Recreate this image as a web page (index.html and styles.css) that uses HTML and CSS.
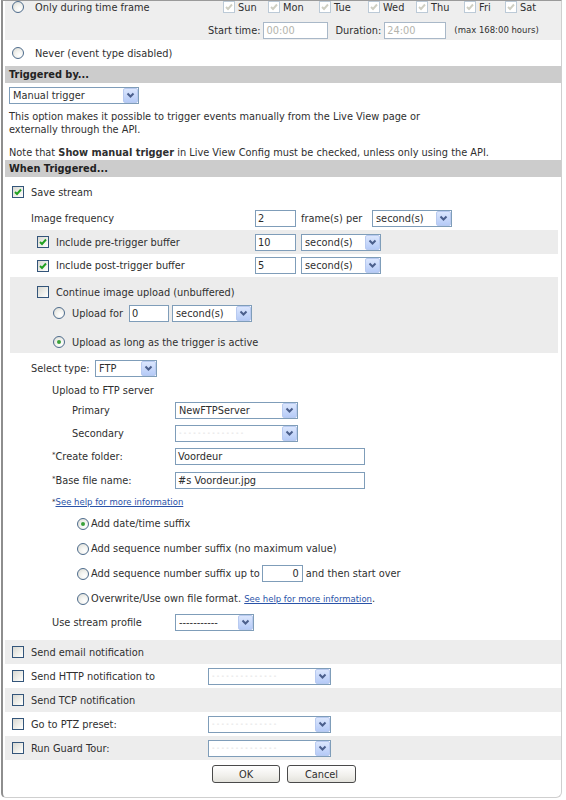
FILE: index.html
```html
<!DOCTYPE html>
<html>
<head>
<meta charset="utf-8">
<link rel="stylesheet" href="styles.css">
</head>
<body>
<div class="frame">

  <div class="timerow">
    <div class="tl1">
      <span class="rb"></span><span class="tlabel">Only during time frame</span>
      <div class="days">
        <span class="day"><span class="cb dis"><svg viewBox="0 0 10 10"><path d="M2 5l2 2 4-4.5"/></svg></span>Sun</span>
        <span class="day"><span class="cb dis"><svg viewBox="0 0 10 10"><path d="M2 5l2 2 4-4.5"/></svg></span>Mon</span>
        <span class="day"><span class="cb dis"><svg viewBox="0 0 10 10"><path d="M2 5l2 2 4-4.5"/></svg></span>Tue</span>
        <span class="day"><span class="cb dis"><svg viewBox="0 0 10 10"><path d="M2 5l2 2 4-4.5"/></svg></span>Wed</span>
        <span class="day"><span class="cb dis"><svg viewBox="0 0 10 10"><path d="M2 5l2 2 4-4.5"/></svg></span>Thu</span>
        <span class="day"><span class="cb dis"><svg viewBox="0 0 10 10"><path d="M2 5l2 2 4-4.5"/></svg></span>Fri</span>
        <span class="day"><span class="cb dis"><svg viewBox="0 0 10 10"><path d="M2 5l2 2 4-4.5"/></svg></span>Sat</span>
      </div>
    </div>
    <div class="tl2">
      <span>Start time:</span>
      <span class="inp dis w-start">00:00</span>
      <span class="lab-dur">Duration:</span>
      <span class="inp dis w-dur">24:00</span>
      <span class="small">(max 168:00 hours)</span>
    </div>
  </div>

  <div class="never"><span class="rb"></span><span class="nlabel">Never (event type disabled)</span></div>

  <div class="hdr">Triggered by...</div>
  <div class="trig">
    <div class="sel w-trig"><span class="v">Manual trigger</span><span class="arr"><svg viewBox="0 0 9 7"><path d="M1.5 1.5 4.5 4.5 7.5 1.5"/></svg></span></div>
  </div>
  <p class="para">This option makes it possible to trigger events manually from the Live View page or<br>externally through the API.</p>
  <p class="para note">Note that <b>Show manual trigger</b> in Live View Config must be checked, unless only using the API.</p>

  <div class="hdr hdr2">When Triggered...</div>

  <div class="save"><span class="cb on"><svg viewBox="0 0 10 10"><path d="M2 5l2 2 4-4.5"/></svg></span>Save stream</div>

  <div class="ifreq">
    <span class="flabel">Image frequency</span>
    <span class="inp w41">2</span>
    <span class="per">frame(s) per</span>
    <div class="sel w80"><span class="v">second(s)</span><span class="arr"><svg viewBox="0 0 9 7"><path d="M1.5 1.5 4.5 4.5 7.5 1.5"/></svg></span></div>
  </div>

  <div class="buf gray">
    <span class="cb on"><svg viewBox="0 0 10 10"><path d="M2 5l2 2 4-4.5"/></svg></span>
    <span class="blabel">Include pre-trigger buffer</span>
    <span class="inp w41">10</span>
    <div class="sel w80 ml5"><span class="v">second(s)</span><span class="arr"><svg viewBox="0 0 9 7"><path d="M1.5 1.5 4.5 4.5 7.5 1.5"/></svg></span></div>
  </div>
  <div class="buf post">
    <span class="cb on"><svg viewBox="0 0 10 10"><path d="M2 5l2 2 4-4.5"/></svg></span>
    <span class="blabel">Include post-trigger buffer</span>
    <span class="inp w41">5</span>
    <div class="sel w80 ml5"><span class="v">second(s)</span><span class="arr"><svg viewBox="0 0 9 7"><path d="M1.5 1.5 4.5 4.5 7.5 1.5"/></svg></span></div>
  </div>

  <div class="cont gray">
    <div class="crow1"><span class="cb"></span>Continue image upload (unbuffered)</div>
    <div class="crow2">
      <span class="rb"></span><span class="ulabel">Upload for</span>
      <span class="inp w40">0</span>
      <div class="sel w80 ml3"><span class="v">second(s)</span><span class="arr"><svg viewBox="0 0 9 7"><path d="M1.5 1.5 4.5 4.5 7.5 1.5"/></svg></span></div>
    </div>
    <div class="crow3"><span class="rb on"></span><span class="ulabel2">Upload as long as the trigger is active</span></div>
  </div>

  <div class="seltype">
    <span class="stlabel">Select type:</span>
    <div class="sel w62"><span class="v">FTP</span><span class="arr"><svg viewBox="0 0 9 7"><path d="M1.5 1.5 4.5 4.5 7.5 1.5"/></svg></span></div>
  </div>
  <div class="ftp">Upload to FTP server</div>
  <div class="srv srv1">
    <span class="slabel">Primary</span>
    <div class="sel w123"><span class="v">NewFTPServer</span><span class="arr"><svg viewBox="0 0 9 7"><path d="M1.5 1.5 4.5 4.5 7.5 1.5"/></svg></span></div>
  </div>
  <div class="srv srv2">
    <span class="slabel">Secondary</span>
    <div class="sel w123"><span class="v dash">- - - - - - - - - - - - - -</span><span class="arr"><svg viewBox="0 0 9 7"><path d="M1.5 1.5 4.5 4.5 7.5 1.5"/></svg></span></div>
  </div>
  <div class="fld fld1">
    <span class="fdlabel"><sup>*</sup>Create folder:</span>
    <span class="inp w190">Voordeur</span>
  </div>
  <div class="fld fld2">
    <span class="fdlabel"><sup>*</sup>Base file name:</span>
    <span class="inp w190">#s Voordeur.jpg</span>
  </div>
  <div class="help"><sup>*</sup><a class="lnk">See help for more information</a></div>

  <div class="opt"><span class="rb on"></span>Add date/time suffix</div>
  <div class="opt"><span class="rb"></span>Add sequence number suffix (no maximum value)</div>
  <div class="opt"><span class="rb"></span>Add sequence number suffix up to <span class="inp w41 num">0</span> and then start over</div>
  <div class="opt"><span class="rb"></span>Overwrite/Use own file format.&nbsp;<a class="lnk">See help for more information</a>.</div>

  <div class="profile">
    <span class="fdlabel">Use stream profile</span>
    <div class="sel w79"><span class="v">-----------</span><span class="arr"><svg viewBox="0 0 9 7"><path d="M1.5 1.5 4.5 4.5 7.5 1.5"/></svg></span></div>
  </div>

  <div class="notifs">
    <div class="nrow gray2"><span class="cb"></span><span class="nl">Send email notification</span></div>
    <div class="nrow"><span class="cb"></span><span class="nl">Send HTTP notification to</span>
      <div class="sel w123"><span class="v dash">- - - - - - - - - - - - - -</span><span class="arr"><svg viewBox="0 0 9 7"><path d="M1.5 1.5 4.5 4.5 7.5 1.5"/></svg></span></div></div>
    <div class="nrow gray2"><span class="cb"></span><span class="nl">Send TCP notification</span></div>
    <div class="nrow tall"><span class="cb"></span><span class="nl">Go to PTZ preset:</span>
      <div class="sel w123"><span class="v dash">- - - - - - - - - - - - - -</span><span class="arr"><svg viewBox="0 0 9 7"><path d="M1.5 1.5 4.5 4.5 7.5 1.5"/></svg></span></div></div>
    <div class="nrow tall gray2"><span class="cb"></span><span class="nl">Run Guard Tour:</span>
      <div class="sel w123"><span class="v dash">- - - - - - - - - - - - - -</span><span class="arr"><svg viewBox="0 0 9 7"><path d="M1.5 1.5 4.5 4.5 7.5 1.5"/></svg></span></div></div>
  </div>

  <div class="btns">
    <span class="btn ok">OK</span>
    <span class="btn cancel">Cancel</span>
  </div>
</div>
</body>
</html>
```

FILE: styles.css
```css
* { box-sizing: border-box; }
body {
  margin: 0;
  background: #fff;
  font-family: "DejaVu Sans", Verdana, sans-serif;
  font-size: 9.8px;
  color: #2f2f2f;
}
.frame {
  margin-left: 1px;
  width: 561px;
  height: 798px;
  border-left: 2px solid #8e8e8e;
  border-top: 1px solid #9a9a9a;
  border-right: 1px solid #cfcfcf;
  border-bottom: 1px solid #cfcfcf;
  border-radius: 0 0 6px 5px;
  overflow: hidden;
}

/* generic controls */
.cb {
  flex: none;
  width: 12px;
  height: 12px;
  border: 1px solid #33557a;
  background: linear-gradient(135deg, #d8d8d2 0%, #f4f4f0 70%, #fff 100%);
  display: inline-flex;
  align-items: center;
  justify-content: center;
  margin-right: 7px;
}
.cb svg { width: 10px; height: 10px; display: none; }
.cb.on svg, .cb.dis svg { display: block; }
.cb svg path { fill: none; stroke: #21a121; stroke-width: 1.9; }
.cb.dis { border-color: #bccad7; background: #fff; }
.cb.dis svg path { stroke: #cfcfc3; }

.rb {
  flex: none;
  width: 12px;
  height: 12px;
  border-radius: 50%;
  border: 1px solid #4d6b8c;
  background: radial-gradient(circle at 65% 70%, #fff 0%, #f2f2ee 45%, #d7d7d0 100%);
  position: relative;
}
.rb.on::after {
  content: "";
  position: absolute;
  left: 3px;
  top: 3px;
  width: 4px;
  height: 4px;
  border-radius: 50%;
  background: #3aa13a;
}

.inp {
  flex: none;
  display: inline-flex;
  align-items: center;
  height: 17px;
  border: 1px solid #7f9db9;
  background: #fff;
  padding-left: 2px;
  white-space: nowrap;
  color: #2b2b2b;
}
.inp.dis { border-color: #a9b8c8; color: #b4b4ac; }
.inp.num { justify-content: flex-end; padding-right: 3px; margin: 0 3px 0 2px; }

.sel {
  flex: none;
  display: flex;
  align-items: center;
  height: 17px;
  border: 1px solid #7f9db9;
  background: #fff;
  padding-left: 3px;
}
.sel .v { flex: 1; overflow: hidden; white-space: nowrap; }
.sel .v.dash { color: #cfcfcf; font-size: 7px; letter-spacing: 0; }
.sel .arr {
  flex: none;
  width: 15px;
  height: 15px;
  border: 1px solid #b8caf0;
  border-radius: 2px;
  background: linear-gradient(#dbe6fd, #b6cbf7);
  display: flex;
  align-items: center;
  justify-content: center;
}
.sel .arr svg { width: 9px; height: 7px; }
.sel .arr path { fill: none; stroke: #4b5f8c; stroke-width: 2; }

.w-start { width: 65px; }
.w-dur { width: 62px; }
.w41 { width: 41px; }
.w40 { width: 40px; }
.w62 { width: 62px; }
.w79 { width: 79px; }
.w80 { width: 80px; }
.w123 { width: 123px; }
.w190 { width: 190px; }
.w-trig { width: 130px; }
.ml5 { margin-left: 5px; }
.ml3 { margin-left: 3px; }

sup { font-size: 7px; vertical-align: 3px; line-height: 0; }
.lnk { color: #2a53a8; text-decoration: underline; font-size: 8.5px; }

/* time frame */
.timerow {
  margin-left: 2px;
  height: 39px;
  background: #eeeeee;
}
.tl1 {
  height: 12px;
  display: flex;
  align-items: center;
  padding-left: 7px;
}
.tlabel { width: 188px; margin-left: 11px; }
.days {
  display: grid;
  grid-template-columns: 45px 51px 49px 48px 48px 41px auto;
}
.day { display: flex; align-items: center; }
.day .cb { margin-right: 3px; }
.tl2 {
  margin-top: 8px;
  height: 18px;
  display: flex;
  align-items: center;
  padding-left: 203px;
}
.tl2 .inp { margin-left: 3px; }
.lab-dur { margin-left: 7px; }
.small { font-size: 8.5px; margin-left: 8px; }

.never {
  height: 26px;
  display: flex;
  align-items: center;
  padding-left: 9px;
}
.nlabel { margin-left: 11px; }

/* headers */
.hdr {
  margin-left: 2px;
  height: 17px;
  line-height: 17px;
  padding-left: 4px;
  background: #cccccc;
  font-weight: bold;
  color: #222;
}
.hdr2 { margin-top: 1px; }

.trig { padding: 4px 0 0 6px; }
.para { margin: 6px 0 0 6px; line-height: 13px; }
.para.note { margin-top: 10px; }

/* when triggered */
.save {
  height: 30px;
  display: flex;
  align-items: center;
  padding-left: 9px;
}
.ifreq {
  height: 23px;
  display: flex;
  align-items: center;
  padding-left: 28px;
}
.flabel { width: 224px; }
.per { width: 76px; padding-left: 5px; }

.gray { background: #ececec; }
.buf {
  margin: 0 3px 0 7px;
  height: 24px;
  display: flex;
  align-items: center;
  padding-left: 27px;
}
.buf.post { height: 23px; }
.blabel { width: 199px; }

.cont {
  margin: 0 3px 0 7px;
  height: 76px;
  padding-top: 4px;
}
.crow1 {
  height: 22px;
  display: flex;
  align-items: center;
  padding-left: 27px;
}
.crow2 {
  height: 20px;
  display: flex;
  align-items: center;
  padding-left: 43px;
}
.ulabel { width: 64px; padding-left: 7px; }
.crow3 {
  margin-top: 8px;
  height: 22px;
  display: flex;
  align-items: center;
  padding-left: 43px;
}
.ulabel2 { padding-left: 7px; }

.seltype {
  margin-top: 2px;
  height: 26px;
  display: flex;
  align-items: center;
  padding-left: 28px;
}
.stlabel { width: 64px; }
.ftp {
  height: 18px;
  display: flex;
  align-items: center;
  padding-left: 49px;
}
.srv {
  display: flex;
  align-items: center;
  padding-left: 69px;
}
.srv1 { height: 22px; }
.srv2 { height: 24px; }
.slabel { width: 103px; }
.fld {
  display: flex;
  align-items: center;
  padding-left: 49px;
}
.fld1 { height: 23px; }
.fld2 { height: 24px; }
.fdlabel { width: 123px; }
.help {
  height: 19px;
  display: flex;
  align-items: center;
  padding-left: 49px;
}
.opt {
  height: 25px;
  display: flex;
  align-items: center;
  padding-left: 74px;
  white-space: nowrap;
}
.opt .rb { margin-right: 2px; }
.profile {
  height: 23px;
  display: flex;
  align-items: center;
  padding-left: 49px;
}

/* notifications */
.notifs { margin-top: 6px; }
.nrow {
  margin-left: 2px;
  height: 24px;
  display: flex;
  align-items: center;
  padding-left: 7px;
}
.nrow.tall { height: 24px; }
.gray2 { background: #ededed; }
.nl { width: 177px; }

.btns {
  display: flex;
  padding: 5px 0 0 209px;
  gap: 7px;
}
.btn {
  height: 18px;
  border: 1px solid #4a4a4a;
  border-radius: 3px;
  background: linear-gradient(#ffffff, #f1f0ec 60%, #e3e2dc);
  display: flex;
  align-items: center;
  justify-content: center;
}
.ok { width: 68px; }
.cancel { width: 69px; }
```
